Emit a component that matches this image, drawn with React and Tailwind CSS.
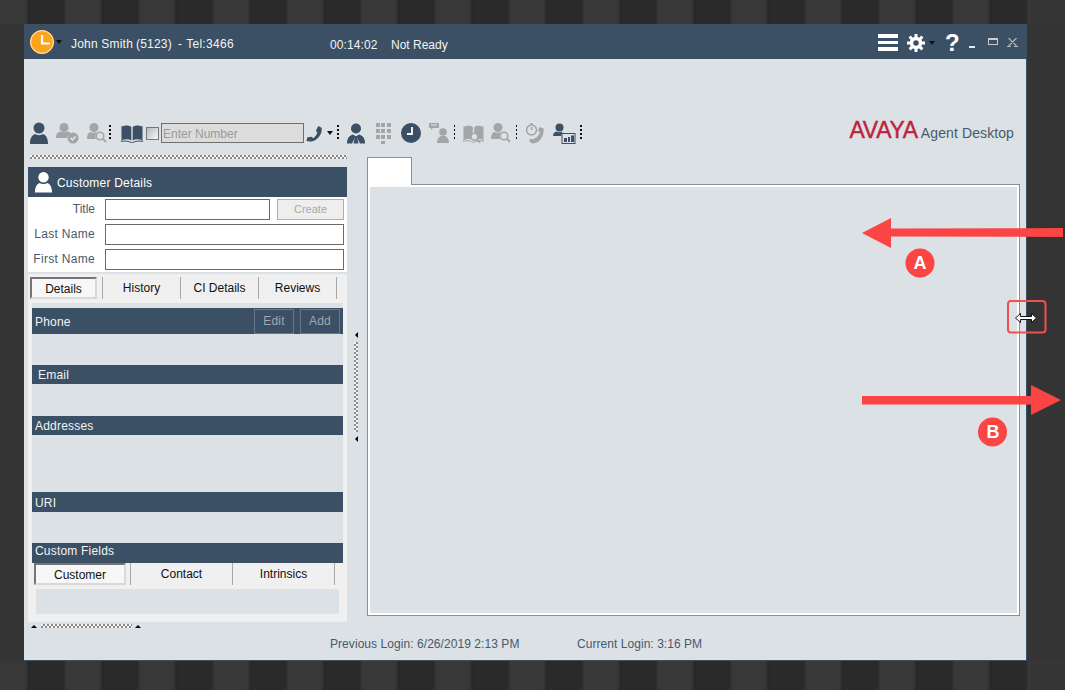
const Dots = ({ ml = 0 }) => (
  <div className="w-[1.500px] h-[14px] shrink-0 mb-[3px] bg-[repeating-linear-gradient(to_bottom,#111_0,#111_2px,transparent_2px,transparent_4px)]" style={{ marginLeft: ml }} />
);
const D = "#3b5064";
const G = "#a3a5a7";
const Person = ({ c, className }) => (
  <svg viewBox="0 0 18 22" className={className}><circle cx="9" cy="6" r="5.5" fill={c} /><path d="M0 22c0-6 2-9 5-10 2 1.500 6 1.500 8 0 3 1 5 4 5 10z" fill={c} /></svg>
);
const Check = () => (
  <svg viewBox="0 0 23 22" className="w-[23px] h-[22px] shrink-0 ml-[8px]"><circle cx="8" cy="5.500" r="4.500" fill={G} /><path d="M0 16c0-4 2-6 4-6.500 2 1 6 1 8 0 1 .3 2 1 2.600 2-2 1-3.600 2.500-3.600 4.500z" fill={G} /><circle cx="17" cy="16" r="5.500" fill={G} /><path d="M14.500 16l2 2 3-3.500" stroke="#e8e8e8" strokeWidth="1.500" fill="none" /></svg>
);
const PersonSearch = ({ ml }) => (
  <svg viewBox="0 0 20 22" className="w-[20px] h-[22px] shrink-0" style={{ marginLeft: ml }}><circle cx="7" cy="5.500" r="4.500" fill={G} /><path d="M0 17c0-4 1-6 3-7 2 1 5 1 7 0-2 2-2 5-1 7z" fill={G} /><circle cx="13" cy="14" r="3.800" stroke={G} strokeWidth="1.500" fill="none" /><path d="M16 17l3 3" stroke={G} strokeWidth="2" /></svg>
);
const Book = ({ c, className, style, search }) => (
  <svg viewBox="0 0 22 19" className={className} style={style}>
    <path d="M1 2.500c3-1.500 7-1.500 9.300.5v13.500c-2.300-1.500-6-1.500-9.300-.5z" fill={c} />
    <path d="M21 2.500c-3-1.500-7-1.500-9.300.5v13.500c2.300-1.500 6-1.500 9.300-.5z" fill={c} />
    <path d="M0 2v15.500c4-1 8-.5 11 1.500 3-2 7-2.500 11-1.500V2" stroke={c} strokeWidth="1" fill="none" />
    {search && <g><circle cx="12" cy="13" r="3.600" fill="#dce1e5" stroke={G} strokeWidth="1.500" /><path d="M15 16l3 3" stroke={G} strokeWidth="2" /></g>}
  </svg>
);
const Phone = ({ c, className, style }) => (
  <svg viewBox="0 0 18 18" className={className} style={style}><path d="M13 1l3.500 2c.8 5-2 10-6 12.500-3 2-7 2.500-10 1.500l1-4 4.500-.5 1.500 1.500c2-1 4-3.500 4.500-6L10.500 6z" fill={c} /></svg>
);
const Caret = ({ c = "#111", className = "" }) => (
  <div className={`w-0 h-0 border-l-[3px] border-r-[3px] border-t-[4px] border-l-transparent border-r-transparent ${className}`} style={{ borderTopColor: c }} />
);
const Agent = () => (
  <svg viewBox="0 0 18 20" className="w-[18px] h-[21px] shrink-0 ml-[8px]"><circle cx="9" cy="5" r="5" fill={D} /><path d="M0 20c0-5 2-8 6-9l3 2 3-2c4 1 6 4 6 9h-5l-3-6h-2l-3 6z" fill={D} /><path d="M8 13h2l1.500 7h-5z" fill={D} /></svg>
);
const Dial = () => (
  <div className="grid grid-cols-3 gap-x-[1.500px] gap-y-[2px] w-[15px] ml-[11px] shrink-0">
    {[0,1,2,3,4,5,6,7,8].map(i => <div key={i} className="h-[4px] bg-[#a3a5a7]" />)}
    <div className="col-start-2 h-[3px] bg-[#a3a5a7]" />
  </div>
);
const Clock = () => (
  <svg viewBox="0 0 20 20" className="w-[20px] h-[20px] ml-[10px] shrink-0"><circle cx="10" cy="10" r="10" fill={D} /><path d="M11 4v7H6" stroke="#fff" strokeWidth="1.800" fill="none" /></svg>
);
const Chat = () => (
  <svg viewBox="0 0 20 20" className="w-[20px] h-[20px] ml-[8px] shrink-0"><path d="M0 0h10v5H4l-2 2V5H0z" fill={G} /><path d="M2 2h6" stroke="#e6e6e6" /><circle cx="14" cy="9" r="3.800" fill={G} /><path d="M8 20c0-4 2-6 3.500-7h5c1.500 1 3.500 3 3.500 7z" fill={G} /></svg>
);
const Timer = () => (
  <svg viewBox="0 0 20 21" className="w-[20px] h-[21px] shrink-0 ml-[8px]"><circle cx="6.500" cy="7" r="5" stroke={G} strokeWidth="1.500" fill="none" /><path d="M5 1h3M6.500 4v3" stroke={G} strokeWidth="1.500" /><path d="M14.500 4l4 1.500c1 6-3 15-11 15l-3.500-2 1-2.500c5 1 9-3 10-7l-2-1z" fill={G} /></svg>
);
const Report = () => (
  <svg viewBox="0 0 23 21" className="w-[23px] h-[21px] shrink-0 ml-[8px]"><circle cx="6.500" cy="4.500" r="4" fill={D} /><path d="M0 13c0-3 2-4 3.500-4.500 2 1 4 1 6 0L8 13z" fill={D} /><rect x="8.500" y="10" width="14" height="11" fill={D} /><rect x="9.500" y="11" width="12" height="9" fill="#dce1e5" /><path d="M11 15h3v4h-3zM15 14h2v5h-2zM18 12.500h3V19h-3z" fill={D} /></svg>
);
const Section = ({ title, className, children }) => (
  <div className={`bg-[#3b5064] text-[#f2f4f6] text-[12px] tracking-[0.2px] flex items-center ${className}`}>{title}{children}</div>
);
const Tab = ({ label, w, active }) => active ? (
  <div className={`${w} h-[22px] flex items-center justify-center text-[12px] text-[#111] border-2 border-[#757575] border-r-[#d9d9d9] border-b-[#d9d9d9] bg-[#f7f7f7] pt-[2px]`}>{label}</div>
) : (
  <div className={`${w} h-[22px] flex items-center justify-center text-[12px] text-[#111] border-r border-[#a8a8a8]`}>{label}</div>
);
const Grip = ({ className }) => (
  <div className={`bg-[repeating-conic-gradient(#8a8a8a_0_25%,#f4f4f4_0_50%)] bg-[length:4px_4px] ${className}`} />
);
const StripeBand = ({ h }) => (
  <div className={`flex ${h}`}>
    <div className="w-[1030px] shrink-0 bg-[repeating-linear-gradient(to_right,#2a2a2a_-44px,#2a2a2a_-10px,#383838_-8px,#383838_25px,#242424_30px)]" />
    <div className="flex-1 bg-[#363636]" />
  </div>
);

export default function App() {
  return (
    <div className="relative w-[1065px] h-[690px] overflow-hidden bg-[#343434] font-['Liberation_Sans',Arial,sans-serif]">
      <StripeBand h="h-[24px]" />
      <div className="flex h-[637px]">
        <div className="w-[24px] shrink-0" />
        <div className="w-[1003px] shrink-0 bg-[#dce1e5] border-r border-b border-[#3b5064] flex flex-col">
          {/* title bar */}
          <div className="h-[35px] shrink-0 bg-[#3b5064] flex items-center text-[12px] text-[#f2f4f6]">
            <svg viewBox="0 0 24 24" className="w-[24px] h-[24px] ml-[6px] shrink-0"><circle cx="12" cy="12" r="12" fill="#fba51c" /><circle cx="12" cy="12" r="11.400" fill="none" stroke="#fff" strokeWidth=".8" /><path d="M12 5v8.500h8" stroke="#fff" strokeWidth="2.200" fill="none" /></svg>
            <Caret className="ml-[2px]" />
            <div className="ml-[9px] w-[259px] shrink-0 flex mt-[4px] tracking-[0.2px]">
              <span>John Smith</span>
              <span className="ml-[3px]">(5123)</span>
              <span className="ml-[6px]">-</span>
              <span className="ml-[4px] tracking-[0.3px]">Tel:3466</span>
            </div>
            <span className="w-[61px] shrink-0 mt-[6px] tracking-[0.1px]">00:14:02</span>
            <span className="mt-[6px]">Not Ready</span>
            <div className="ml-auto flex items-center mt-[2px]">
              <div className="flex flex-col gap-[3px] w-[20px]"><div className="h-[3.500px] bg-white" /><div className="h-[3.500px] bg-white" /><div className="h-[3.500px] bg-white" /></div>
              <svg viewBox="0 0 18 18" className="w-[18px] h-[18px] ml-[9px]"><circle cx="9" cy="9" r="4.500" fill="none" stroke="#fff" strokeWidth="3.500" /><path d="M9 0v18M0 9h18M2.600 2.600l12.800 12.800M15.400 2.600L2.600 15.400" stroke="#fff" strokeWidth="3" strokeDasharray="3.500 11 3.500" /></svg>
              <Caret className="ml-[4px]" />
              <span className="ml-[10px] w-[13px] text-[24px] font-bold text-white leading-none">?</span>
              <div className="ml-[11px] w-[6px] h-[2px] bg-[#e8e8e8] mt-[8px]" />
              <div className="ml-[13px] w-[10px] h-[7px] border border-[#c8cdd2] border-t-2 -mt-[2px]" />
              <svg viewBox="0 0 11 9" className="ml-[9px] mr-[8px] w-[11px] h-[9px]"><path d="M1.500 0l8 8M9.500 0l-8 8M0 8.500h4M7 8.500h4" stroke="#aeb5bb" strokeWidth="1.200" fill="none" /></svg>
            </div>
          </div>
          {/* toolbar */}
          <div className="mt-[63px] h-[22px] flex items-center shrink-0">
            <Person c={D} className="w-[18px] h-[22px] ml-[6px] shrink-0" />
            <Check />
            <PersonSearch ml={8} />
            <Dots ml={2} />
            <Book c={D} className="w-[22px] h-[19px] shrink-0" style={{ marginLeft: 10.5 }} />
            <div className="w-[13px] h-[13px] ml-[3px] border border-[#757575] bg-[linear-gradient(135deg,#b8b8b8,#f8f8f8)] shrink-0" />
            <div className="w-[143px] h-[20px] ml-[2px] shrink-0 border border-[#6f6f6f] bg-[#dcdcdc] text-[12px] text-[#9a9a9a] pl-[1px] leading-[20px]">Enter Number</div>
            <Phone c={D} className="w-[17px] h-[17px] ml-[2px] shrink-0" />
            <Caret className="ml-[4px]" />
            <Dots ml={4} />
            <Agent />
            <Dial />
            <Clock />
            <Chat />
            <Dots ml={5} />
            <Book c={G} search className="w-[21px] h-[19px] shrink-0" style={{ marginLeft: 7.5 }} />
            <PersonSearch ml={7} />
            <Dots ml={5} />
            <Timer />
            <Report />
            <Dots ml={4} />
            <div className="ml-auto flex items-baseline mr-[12px] mb-[6px]">
              <span className="text-[23px] leading-none text-[#c0213a] tracking-[-0.3px] [-webkit-text-stroke:0.4px_#c0213a]">AVAYA</span>
              <span className="ml-[3px] text-[14px] leading-none text-[#47596c] tracking-[0.1px]">Agent Desktop</span>
            </div>
          </div>
          {/* body */}
          <div className="flex mt-[11px] flex-1 min-h-0">
            {/* left */}
            <div className="w-[319px] ml-[4px] shrink-0 flex flex-col">
              <Grip className="h-[4px] w-[317px] ml-[2px] shrink-0" />
              <div className="h-[30px] mt-[8px] shrink-0 bg-[#3b5064] flex items-center text-white text-[12px] tracking-[0.2px]">
                <Person c="#fff" className="w-[17px] h-[22px] ml-[7px]" />
                <span className="ml-[5px] mt-[2px]">Customer Details</span>
              </div>
              <div className="w-[319px] h-[75px] bg-white shrink-0 text-[12px] text-[#47596c] flex flex-col pt-[2px] gap-[4px]">
                <div className="flex items-center h-[21px]">
                  <span className="w-[67px] text-right mb-[1px]">Title</span>
                  <div className="ml-[10px] w-[165px] h-[21px] border border-[#6a6a6a]" />
                  <div className="ml-[7px] w-[67px] h-[21px] border border-[#a8b0b8] bg-[#eeeeee] text-[11px] text-[#a6a8aa] flex items-center justify-center">Create</div>
                </div>
                <div className="flex items-center h-[21px]">
                  <span className="w-[67px] text-right mb-[2px] tracking-[0.3px]">Last Name</span>
                  <div className="ml-[10px] w-[239px] h-[21px] border border-[#6a6a6a]" />
                </div>
                <div className="flex items-center h-[21px]">
                  <span className="w-[67px] text-right mb-[2px] tracking-[0.3px]">First Name</span>
                  <div className="ml-[10px] w-[239px] h-[21px] border border-[#6a6a6a]" />
                </div>
              </div>
              <div className="w-[319px] mt-[2px] h-[348px] shrink-0 bg-[#f0f0f0] flex flex-col px-[4px] pt-[3px]">
                <div className="flex h-[22px] shrink-0 -ml-[2px]">
                  <Tab label="Details" w="w-[67px]" active />
                  <div className="w-[6px] border-r border-[#a8a8a8]" />
                  <Tab label="History" w="w-[78px]" />
                  <Tab label="CI Details" w="w-[78px]" />
                  <Tab label="Reviews" w="w-[78px]" />
                </div>
                <div className="mt-[4px] h-[5px] bg-[#dce1e5] shrink-0" />
                <Section title={<span className="mt-[2px]">Phone</span>} className="h-[26px] pl-[3px] shrink-0">
                  <div className="ml-auto flex gap-[6px] mr-[3px]">
                    <div className="w-[40px] h-[25px] border border-[#66788a] text-[#a0a8b0] flex items-center justify-center">Edit</div>
                    <div className="w-[40px] h-[25px] border border-[#66788a] text-[#a0a8b0] flex items-center justify-center">Add</div>
                  </div>
                </Section>
                <div className="h-[31px] bg-[#dce1e5] shrink-0" />
                <Section title="Email" className="h-[19px] pl-[6px] pt-[1px] shrink-0" />
                <div className="h-[32px] bg-[#dce1e5] shrink-0" />
                <Section title="Addresses" className="h-[19px] pl-[3px] shrink-0" />
                <div className="h-[57px] bg-[#dce1e5] shrink-0" />
                <Section title="URI" className="h-[20px] pl-[3px] pt-[1px] shrink-0" />
                <div className="h-[31px] bg-[#dce1e5] shrink-0" />
                <Section title="Custom Fields" className="h-[20px] pl-[3px] pb-[4px] shrink-0" />
                <div className="flex h-[22px] shrink-0 ml-[2px]">
                  <Tab label="Customer" w="w-[92px]" active />
                  <div className="w-[5px] border-r border-[#a8a8a8]" />
                  <Tab label="Contact" w="w-[102px]" />
                  <Tab label="Intrinsics" w="w-[102px]" />
                </div>
                <div className="mt-[4px] mx-[4px] h-[25px] bg-[#dce1e5] shrink-0" />
              </div>
              <div className="flex items-center h-[8px] ml-[3px] shrink-0">
                <div className="w-0 h-0 border-l-[3px] border-r-[3px] border-b-[3px] border-l-transparent border-r-transparent border-b-black" />
                <Grip className="h-[4px] w-[91px] ml-[4px]" />
                <div className="w-0 h-0 ml-[3px] border-l-[3px] border-r-[3px] border-b-[3px] border-l-transparent border-r-transparent border-b-black" />
              </div>
            </div>
            {/* splitter */}
            <div className="w-[18px] shrink-0 flex flex-col items-center pt-[177px]">
              <div className="w-0 h-0 border-t-[3px] border-b-[3px] border-r-[3px] border-t-transparent border-b-transparent border-r-black" />
              <Grip className="w-[4px] h-[90px] mt-[4px]" />
              <div className="w-0 h-0 mt-[4px] border-t-[3px] border-b-[3px] border-r-[3px] border-t-transparent border-b-transparent border-r-black" />
            </div>
            {/* right */}
            <div className="w-[653px] ml-[2px] mt-[2px] shrink-0 flex flex-col">
              <div className="w-[45px] h-[28px] bg-white border border-[#8a8f96] border-b-0 relative z-10 shrink-0" />
              <div className="w-[653px] h-[432px] -mt-[1px] shrink-0 border border-[#8a8f96] p-[2px] bg-white">
                <div className="w-full h-full bg-[#dce1e5]" />
              </div>
            </div>
          </div>
          {/* footer */}
          <div className="h-[27px] shrink-0 flex items-center text-[12px] text-[#47596c] pl-[306px] pb-[6px]">
            <span className="w-[247px] shrink-0 tracking-[0.06px]">Previous Login: 6/26/2019 2:13 PM</span>
            <span className="tracking-[0.05px]">Current Login: 3:16 PM</span>
          </div>
        </div>
      </div>
      <StripeBand h="h-[29px]" />

      {/* annotations */}
      <svg className="absolute left-0 top-0 pointer-events-none" width="1065" height="690" viewBox="0 0 1065 690">
        <path d="M862 233L891 218V228.500L1063 228V237L891 236.500V248z" fill="#fb4444" />
        <path d="M862 396H1031V385L1061 400L1031 415V404.500H862z" fill="#fb4444" />
        <circle cx="920" cy="263" r="14.500" fill="#fb4444" />
        <circle cx="992.500" cy="432" r="14.500" fill="#fb4444" />
        <rect x="1008" y="301" width="37.500" height="31.500" rx="3" fill="none" stroke="#f15050" strokeWidth="2" />
        <path d="M1015.500 318l5-4.500v3h11v-3l5 4.500-5 4.500v-3h-11v3z" fill="#fff" stroke="#111" strokeWidth="1" />
      </svg>
      <div className="absolute left-[905px] top-[249px] w-[30px] h-[29px] flex items-center justify-center text-white font-bold text-[18px]">A</div>
      <div className="absolute left-[978px] top-[418px] w-[30px] h-[29px] flex items-center justify-center text-white font-bold text-[18px]">B</div>
    </div>
  );
}
